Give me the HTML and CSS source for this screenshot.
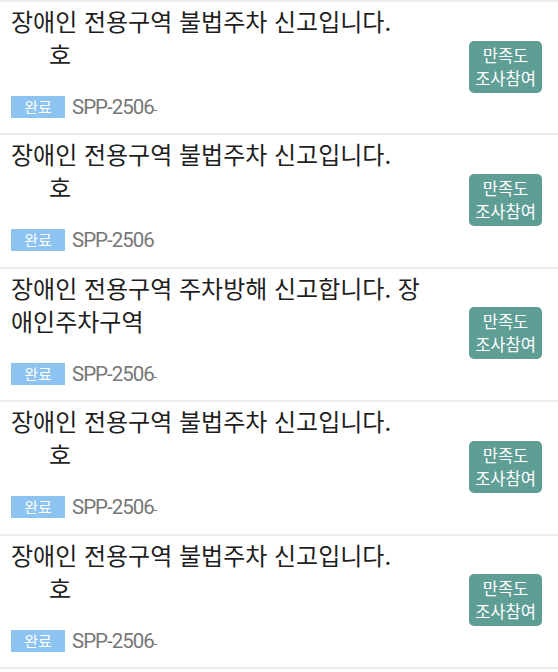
FILE: index.html
```html
<!DOCTYPE html>
<html lang="ko">
<head>
    <meta charset="UTF-8">
    <meta name="viewport" content="width=device-width, initial-scale=1.0">
    <title>신고 내역</title>
    <link rel="stylesheet" href="styles.css">
</head>
<body>
    <ul class="report-list">
        <li class="report">
            <div class="report-body">
                <p class="report-title">장애인 전용구역 불법주차 신고입니다. <span class="masked"></span>호</p>
                <div class="report-meta">
                    <span class="badge">완료</span>
                    <span class="report-no">SPP-2506<span class="cut">-</span></span>
                </div>
            </div>
            <button class="btn-survey">만족도<br>조사참여</button>
        </li>
        <li class="report">
            <div class="report-body">
                <p class="report-title">장애인 전용구역 불법주차 신고입니다. <span class="masked"></span>호</p>
                <div class="report-meta">
                    <span class="badge">완료</span>
                    <span class="report-no">SPP-2506</span>
                </div>
            </div>
            <button class="btn-survey">만족도<br>조사참여</button>
        </li>
        <li class="report">
            <div class="report-body">
                <p class="report-title">장애인 전용구역 주차방해 신고합니다. 장애인주차구역</p>
                <div class="report-meta">
                    <span class="badge">완료</span>
                    <span class="report-no">SPP-2506<span class="cut">-</span></span>
                </div>
            </div>
            <button class="btn-survey">만족도<br>조사참여</button>
        </li>
        <li class="report">
            <div class="report-body">
                <p class="report-title">장애인 전용구역 불법주차 신고입니다. <span class="masked"></span>호</p>
                <div class="report-meta">
                    <span class="badge">완료</span>
                    <span class="report-no">SPP-2506<span class="cut">-</span></span>
                </div>
            </div>
            <button class="btn-survey">만족도<br>조사참여</button>
        </li>
        <li class="report">
            <div class="report-body">
                <p class="report-title">장애인 전용구역 불법주차 신고입니다. <span class="masked"></span>호</p>
                <div class="report-meta">
                    <span class="badge">완료</span>
                    <span class="report-no">SPP-2506<span class="cut">-</span></span>
                </div>
            </div>
            <button class="btn-survey">만족도<br>조사참여</button>
        </li>
    </ul>
</body>
</html>
```

FILE: styles.css
```css
:root {
    --line-color: #ececec; --title-color: #1e1e1e;
    --badge-color: #8dc3f1; --survey-color: #5f9e95;
    --muted-text: #777;
}
body {
    font-family: "Noto Sans CJK KR", "Noto Sans", sans-serif;
    margin: 0; background: white; color: var(--title-color);
}
.report-list { list-style: none; margin: 0; padding: 0; border-top: 2px solid var(--line-color); }
.report {
    display: flex; align-items: center;
    height: 133.4px; box-sizing: border-box;
    padding: 0 16px 0 11px;
    border-bottom: 2px solid var(--line-color);
}
.report-body { flex: 1; padding-right: 40px; align-self: flex-start; padding-top: 2px; }
.report-title {
    margin: 0; font-size: 24px; line-height: 33px;
    height: 66px; overflow: hidden;
}
.masked { display: inline-block; width: 38px; }
.report-meta { display: flex; align-items: center; margin-top: 25px; }
.badge {
    width: 54px; height: 22px; line-height: 22px;
    background-color: var(--badge-color); color: white;
    font-size: 15px; text-align: center;
}
.report-no {
    margin-left: 7px; color: var(--muted-text);
    font-family: Roboto, "Noto Sans", sans-serif;
    font-size: 20.5px; letter-spacing: -1px;
}
.report-no .cut { font-size: 12px; }
.btn-survey {
    width: 73px; height: 52px; padding: 0;
    border: none; border-radius: 5px;
    background-color: var(--survey-color); color: white;
    font-family: inherit; font-size: 16.5px; line-height: 23px;
    margin-top: -2px;
}
```
